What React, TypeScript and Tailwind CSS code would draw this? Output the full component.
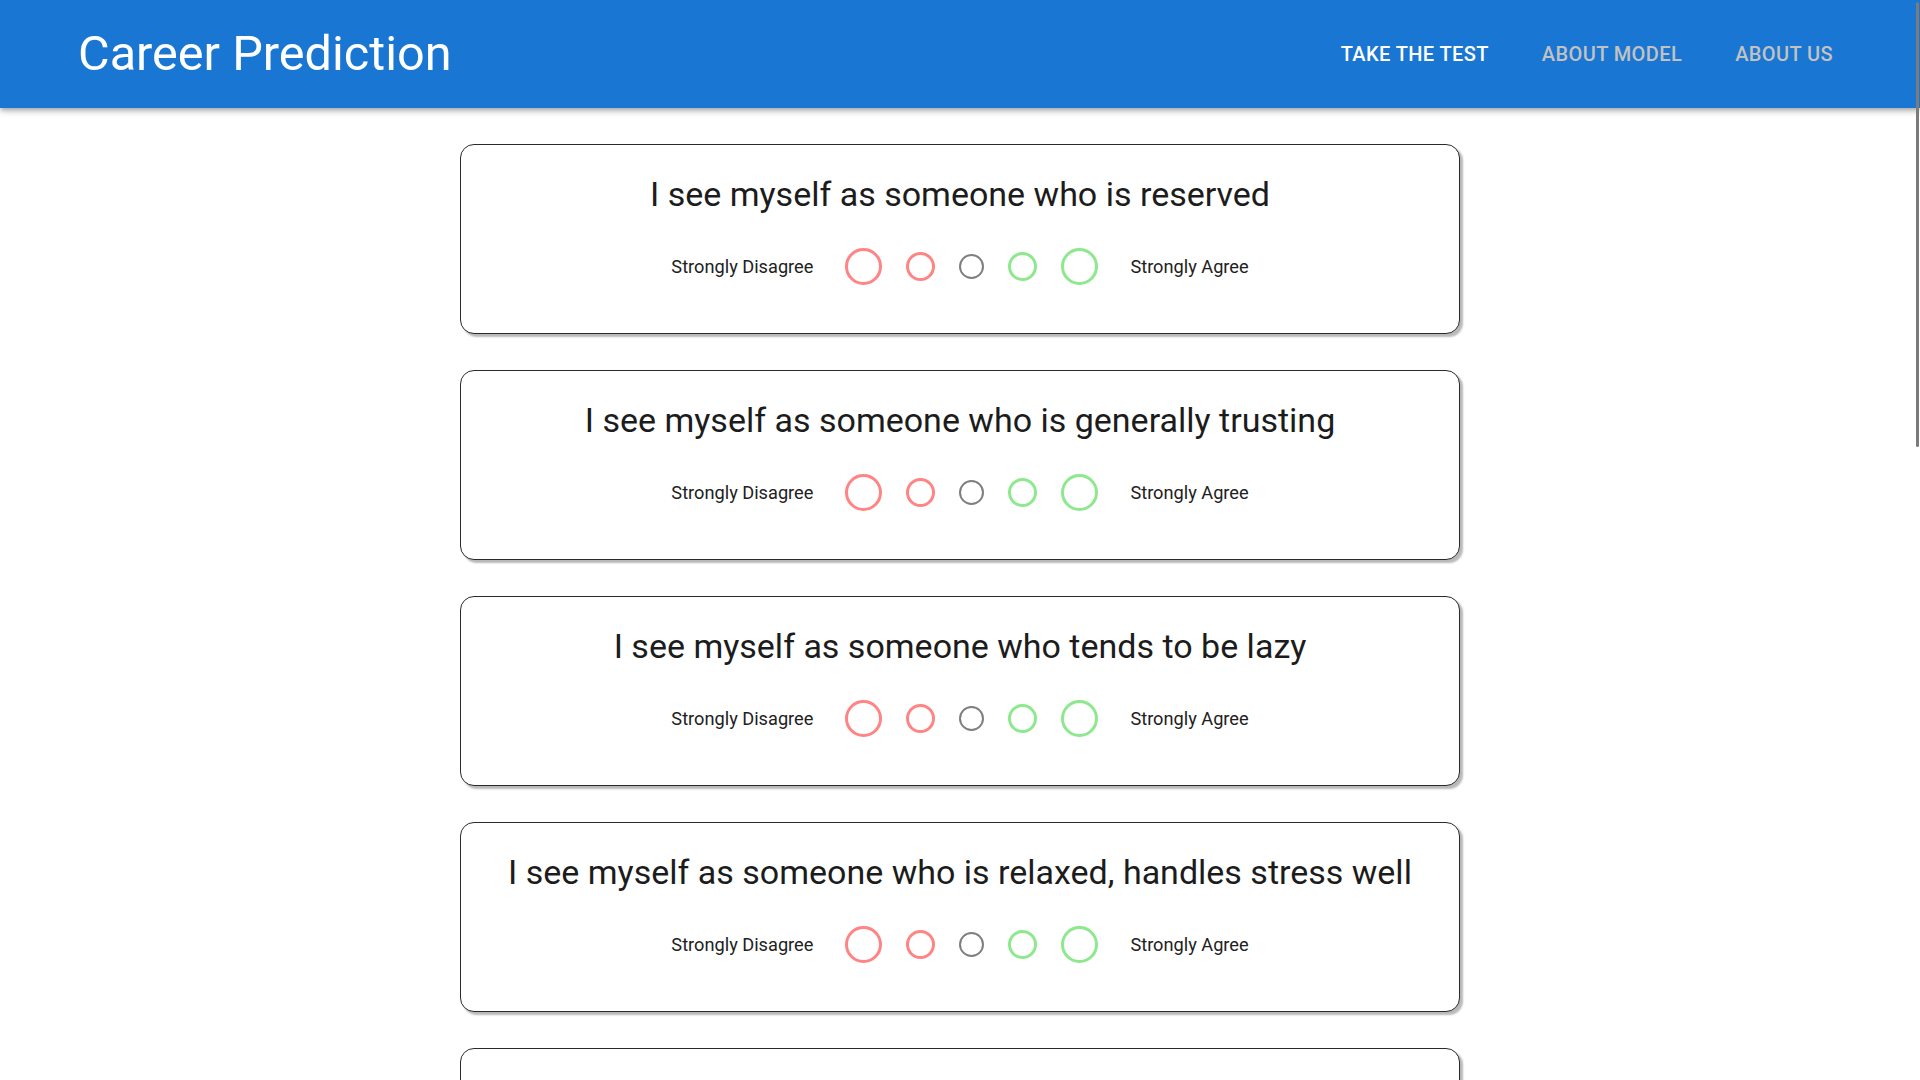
const questions = [
  'I see myself as someone who is reserved',
  'I see myself as someone who is generally trusting',
  'I see myself as someone who tends to be lazy',
  'I see myself as someone who is relaxed, handles stress well',
];

function Scale() {
  return (
    <div className="flex items-center justify-center">
      <span className="text-[18.2px] text-[#212121]">Strongly Disagree</span>
      <div className="mx-[32px] flex items-center gap-[24px]">
        <span className="h-[37px] w-[37px] rounded-full border-[3.5px] border-[#ff8484]" />
        <span className="h-[29px] w-[29px] rounded-full border-[3px] border-[#ff8484]" />
        <span className="h-[25px] w-[25px] rounded-full border-[2.5px] border-[#7f7f7f]" />
        <span className="h-[29px] w-[29px] rounded-full border-[3px] border-[#8ee88e]" />
        <span className="h-[37px] w-[37px] rounded-full border-[3.5px] border-[#8ee88e]" />
      </div>
      <span className="text-[18.2px] text-[#212121]">Strongly Agree</span>
    </div>
  );
}

function QuestionCard({ text }: { text?: string }) {
  return (
    <div className="mb-[36px] flex h-[190px] w-[1000px] shrink-0 flex-col items-center rounded-[14px] border border-[#2a2a2a] bg-white pt-[28px] shadow-[3px_3px_2px_rgba(0,0,0,0.28)]">
      {text && (
        <>
          <h2 className="text-[34px] leading-[42px] text-[#1c1c1c]">{text}</h2>
          <div className="mt-[33px] h-[38px]">
            <Scale />
          </div>
        </>
      )}
    </div>
  );
}

export default function App() {
  return (
    <div
      className="relative h-screen overflow-hidden bg-white"
      style={{ fontFamily: 'Roboto, "Liberation Sans", sans-serif' }}
    >
      <header className="relative z-10 flex h-[108px] items-center justify-between bg-[#1976d2] pl-[78px] pr-[87px] shadow-[0_2px_4px_-1px_rgba(0,0,0,0.2),0_4px_5px_0_rgba(0,0,0,0.14),0_1px_10px_0_rgba(0,0,0,0.12)]">
        <h1 className="text-[48.6px] leading-[56px] text-white">Career Prediction</h1>
        <nav className="flex items-center gap-[53px] text-[20px] font-medium uppercase tracking-[0.02em]">
          <a className="text-white">Take the test</a>
          <a className="text-[#c2c2c2]">About model</a>
          <a className="text-[#c2c2c2]">About us</a>
        </nav>
      </header>

      <main className="flex flex-col items-center pt-[36px]">
        {questions.map((q) => (
          <QuestionCard key={q} text={q} />
        ))}
        {/* next question, scrolled below the fold */}
        <QuestionCard />
      </main>

      {/* overlay scrollbar thumb */}
      <div className="absolute right-[1px] top-[2px] z-20 h-[445px] w-[3px] rounded-full bg-[#7b7b7b]" />
    </div>
  );
}
